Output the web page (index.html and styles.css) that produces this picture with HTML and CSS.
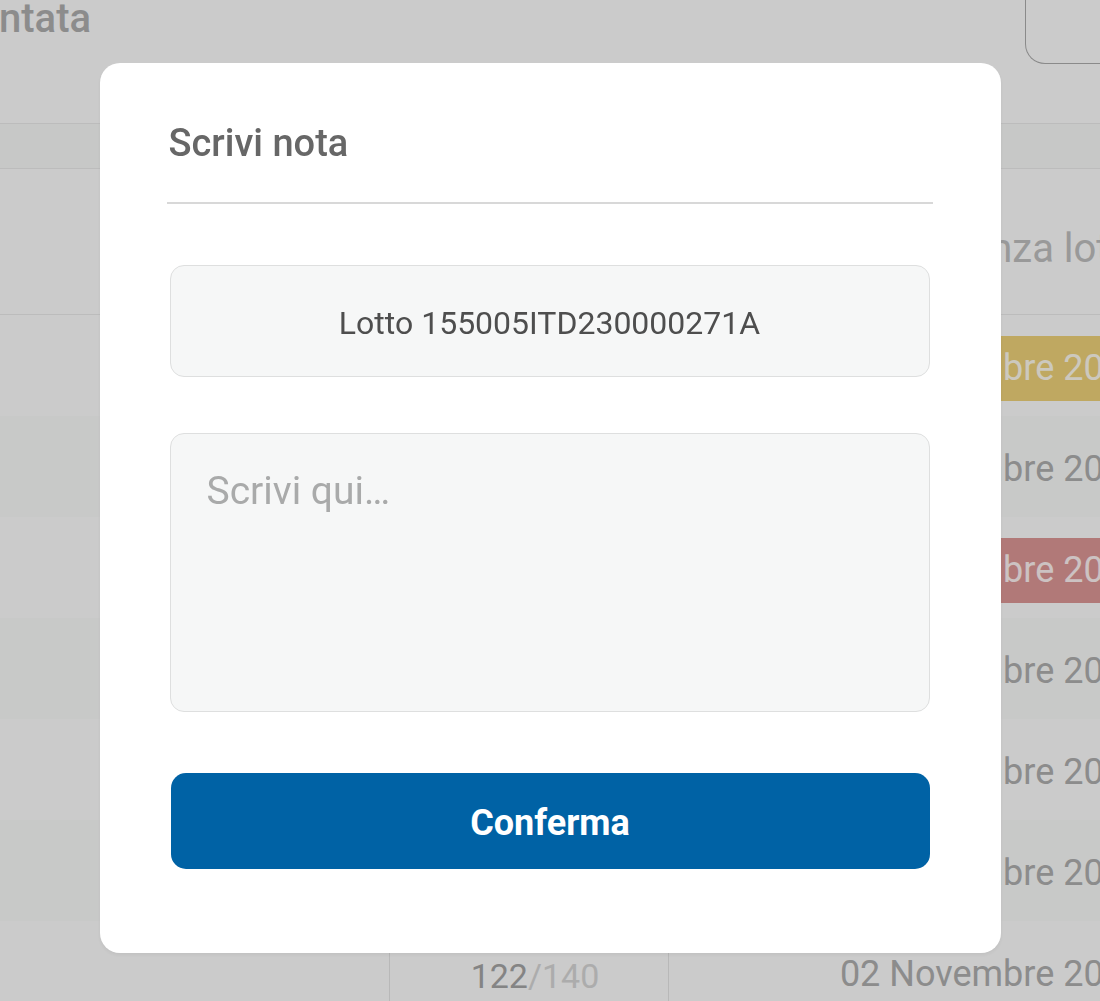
FILE: index.html
```html
<!DOCTYPE html>
<html lang="it">
<head>
<meta charset="utf-8">
<title>Scrivi nota</title>
<link rel="stylesheet" href="styles.css">
</head>
<body>
<div class="page">
  <header class="page-head">
    <h1 class="page-title">ntata</h1>
    <button class="head-btn" type="button"></button>
  </header>
  <div class="table">
    <div class="band"></div>
    <div class="row head-row">
      <div class="cell"></div>
      <div class="cell"></div>
      <div class="cell date-head">Scadenza lotto</div>
    </div>
    <div class="row">
      <div class="cell"></div>
      <div class="cell qty"><span class="qty-done">98</span><span class="qty-tot">/140</span></div>
      <div class="cell date"><span class="pill pill-yellow">03 Novembre 2023</span></div>
    </div>
    <div class="row alt">
      <div class="cell"></div>
      <div class="cell qty"><span class="qty-done">140</span><span class="qty-tot">/140</span></div>
      <div class="cell date"><span class="pill">12 Novembre 2023</span></div>
    </div>
    <div class="row">
      <div class="cell"></div>
      <div class="cell qty"><span class="qty-done">45</span><span class="qty-tot">/140</span></div>
      <div class="cell date"><span class="pill pill-red">01 Novembre 2023</span></div>
    </div>
    <div class="row alt">
      <div class="cell"></div>
      <div class="cell qty"><span class="qty-done">110</span><span class="qty-tot">/140</span></div>
      <div class="cell date"><span class="pill">18 Novembre 2023</span></div>
    </div>
    <div class="row">
      <div class="cell"></div>
      <div class="cell qty"><span class="qty-done">87</span><span class="qty-tot">/140</span></div>
      <div class="cell date"><span class="pill">22 Novembre 2023</span></div>
    </div>
    <div class="row alt">
      <div class="cell"></div>
      <div class="cell qty"><span class="qty-done">133</span><span class="qty-tot">/140</span></div>
      <div class="cell date"><span class="pill">25 Novembre 2023</span></div>
    </div>
    <div class="row">
      <div class="cell"></div>
      <div class="cell qty"><span class="qty-done">122</span><span class="qty-tot">/140</span></div>
      <div class="cell date"><span class="pill">02 Novembre 2023</span></div>
    </div>
  </div>
</div>

<div class="overlay">
  <div class="modal" role="dialog" aria-labelledby="modal-title">
    <h2 class="modal-title" id="modal-title">Scrivi nota</h2>
    <div class="lot-box">Lotto 155005ITD230000271A</div>
    <textarea class="note" placeholder="Scrivi qui…"></textarea>
    <button class="confirm" type="button">Conferma</button>
  </div>
</div>
</body>
</html>
```
FILE: styles.css
```css
* {
  box-sizing: border-box;
}

html, body {
  margin: 0;
  padding: 0;
  width: 1100px;
  height: 1001px;
  overflow: hidden;
  background: #fefefe;
  font-family: Roboto, "Noto Sans", "Liberation Sans", sans-serif;
}

.page {
  width: 1100px;
  overflow: hidden;
}

/* ---------- page header (behind the overlay) ---------- */
.page-head {
  height: 123px;
  display: flex;
  align-items: flex-start;
  justify-content: space-between;
}

.page-title {
  margin: -5px 0 0 -1px;
  font-size: 40px;
  line-height: 48px;
  font-weight: 500;
  color: #b0b0b0;
}

.head-btn {
  width: 110px;
  height: 64px;
  margin-right: -35px;
  border: 1px solid #adadad;
  border-top: none;
  border-radius: 0 0 20px 20px;
  background: #fefefe;
}

/* ---------- table ---------- */
.table {
  width: 1315px;
}

.band {
  height: 46px;
  background: #f9faf9;
  border-top: 1px solid #ececec;
  border-bottom: 1px solid #ececec;
}

.row {
  display: grid;
  grid-template-columns: 390px 279px 646px;
  height: 101px;
  background: #fefefe;
}

.row.alt {
  background: #fbfcfb;
}

.head-row {
  height: 146px;
  border-bottom: 1px solid #ececec;
}

.cell {
  display: flex;
  align-items: center;
  justify-content: center;
  border-right: 1px solid #e6e6e6;
}

.head-row .cell {
  border-right: none;
}

.date-head {
  justify-content: flex-start;
  padding: 14px 0 0 880px;
  margin-left: -669px;
  font-size: 40px;
  color: #c0c0c0;
  white-space: nowrap;
}

.qty {
  font-size: 34px;
  padding: 8px 0 0 12px;
}

.qty-done {
  color: #a6a6a6;
}

.qty-tot {
  color: #d8d8d8;
}

.date {
  padding-top: 6px;
  border-right: none;
}

.pill {
  display: inline-block;
  height: 65px;
  line-height: 65px;
  padding: 0 16px;
  border-radius: 10px;
  font-size: 36px;
  color: #afafaf;
  white-space: nowrap;
}

.pill-yellow {
  background: #efd27a;
  color: #fffbee;
}

.pill-red {
  background: #de9896;
  color: #fff3f3;
}

/* ---------- overlay & modal ---------- */
.overlay {
  position: fixed;
  inset: 0;
  background: rgba(0, 0, 0, 0.2);
  display: flex;
  justify-content: center;
  align-items: flex-start;
  padding-top: 63px;
}

.modal {
  width: 901px;
  background: #ffffff;
  border-radius: 20px;
  padding: 58px 68px 84px 67px;
  display: flex;
  flex-direction: column;
  box-shadow: 0 2px 4px rgba(0, 0, 0, 0.06);
}

.modal-title {
  margin: 0;
  padding: 0 0 37px 2px;
  font-size: 38px;
  line-height: 44px;
  font-weight: 500;
  color: #676767;
  border-bottom: 2px solid #d8d8d8;
}

.lot-box {
  margin: 61px 3px 0;
  height: 112px;
  display: flex;
  align-items: center;
  justify-content: center;
  padding-top: 4px;
  background: #f6f7f7;
  border: 1px solid #dedfdf;
  border-radius: 14px;
  font-size: 32px;
  font-weight: 400;
  color: #4e4e4e;
}

.note {
  display: block;
  margin: 56px 3px 0;
  height: 279px;
  padding: 34px 36px;
  background: #f6f7f7;
  border: 1px solid #dedfdf;
  border-radius: 14px;
  font-family: Roboto, "Noto Sans", "Liberation Sans", sans-serif;
  font-size: 39px;
  line-height: 47px;
  color: #444;
  resize: none;
  outline: none;
}

.note::placeholder {
  color: #a9aaaa;
}

.confirm {
  margin: 61px 3px 0 4px;
  height: 96px;
  padding-top: 4px;
  border: none;
  border-radius: 15px;
  background: #0062a5;
  color: #ffffff;
  font-family: Roboto, "Noto Sans", "Liberation Sans", sans-serif;
  font-size: 36px;
  font-weight: 700;
  cursor: pointer;
}
```
